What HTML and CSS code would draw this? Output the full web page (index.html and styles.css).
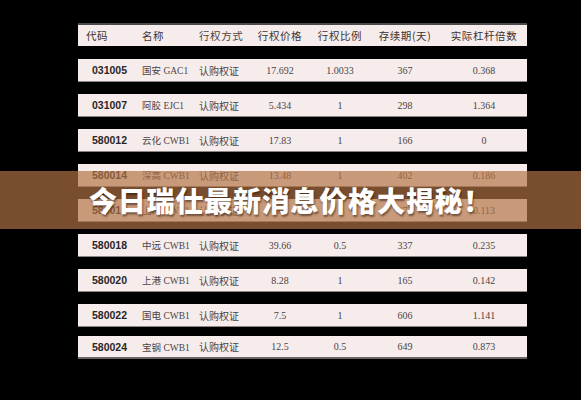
FILE: index.html
```html
<!DOCTYPE html>
<html lang="zh">
<head>
<meta charset="utf-8">
<link rel="stylesheet" href="styles.css">
</head>
<body>
<div class="page">
  <div class="table">
    <div class="row head">
      <div class="c code">代码</div>
      <div class="c name">名称</div>
      <div class="c type">行权方式</div>
      <div class="c num">行权价格</div>
      <div class="c num">行权比例</div>
      <div class="c num">存续期(天)</div>
      <div class="c num">实际杠杆倍数</div>
    </div>
    <div class="row first">
      <div class="c code">031005</div><div class="c name">国安 GAC1</div><div class="c type">认购权证</div>
      <div class="c num">17.692</div><div class="c num">1.0033</div><div class="c num">367</div><div class="c num">0.368</div>
    </div>
    <div class="row">
      <div class="c code">031007</div><div class="c name">阿胶 EJC1</div><div class="c type">认购权证</div>
      <div class="c num">5.434</div><div class="c num">1</div><div class="c num">298</div><div class="c num">1.364</div>
    </div>
    <div class="row">
      <div class="c code">580012</div><div class="c name">云化 CWB1</div><div class="c type">认购权证</div>
      <div class="c num">17.83</div><div class="c num">1</div><div class="c num">166</div><div class="c num">0</div>
    </div>
    <div class="row">
      <div class="c code">580014</div><div class="c name">深高 CWB1</div><div class="c type">认购权证</div>
      <div class="c num">13.48</div><div class="c num">1</div><div class="c num">402</div><div class="c num">0.186</div>
    </div>
    <div class="row">
      <div class="c code">580016</div><div class="c name">上汽 CWB1</div><div class="c type">认购权证</div>
      <div class="c num">32</div><div class="c num">1</div><div class="c num">472</div><div class="c num">0.113</div>
    </div>
    <div class="row">
      <div class="c code">580018</div><div class="c name">中远 CWB1</div><div class="c type">认购权证</div>
      <div class="c num">39.66</div><div class="c num">0.5</div><div class="c num">337</div><div class="c num">0.235</div>
    </div>
    <div class="row">
      <div class="c code">580020</div><div class="c name">上港 CWB1</div><div class="c type">认购权证</div>
      <div class="c num">8.28</div><div class="c num">1</div><div class="c num">165</div><div class="c num">0.142</div>
    </div>
    <div class="row">
      <div class="c code">580022</div><div class="c name">国电 CWB1</div><div class="c type">认购权证</div>
      <div class="c num">7.5</div><div class="c num">1</div><div class="c num">606</div><div class="c num">1.141</div>
    </div>
    <div class="row last">
      <div class="c code">580024</div><div class="c name">宝钢 CWB1</div><div class="c type">认购权证</div>
      <div class="c num">12.5</div><div class="c num">0.5</div><div class="c num">649</div><div class="c num">0.873</div>
    </div>
  </div>
  <div class="banner"><h1 class="title">今日瑞仕最新消息价格大揭秘！</h1></div>
</div>
</body>
</html>
```

FILE: styles.css
```css
html, body {
  margin: 0;
  padding: 0;
  background: #000;
}
.page {
  position: relative;
  width: 581px;
  height: 400px;
  overflow: hidden;
  background: #000;
}
.table {
  margin-left: 78px;
  padding-top: 23px;
  width: 449px;
  display: flex;
  flex-direction: column;
  gap: 12px;
}
.row {
  display: grid;
  grid-template-columns: 64px 57px 50px 62px 58px 72px 1fr;
  align-items: center;
  height: 23px;
  box-sizing: border-box;
  background: #f6ecec;
  border-bottom: 1px solid #8a8484;
  font-family: "Liberation Serif", "Noto Sans CJK SC", serif;
  font-size: 10px;
  color: #4a4444;
}
.row.head {
  height: 23px;
  border-top: 2px solid #4a4a4a;
  border-bottom: none;
  margin-bottom: 1px;
  font-family: "Noto Sans CJK SC", serif;
  font-size: 10.5px;
  color: #3a3434;
  letter-spacing: 0.6px;
}
.row.last {
  margin-top: -3px;
  border-bottom: 2px solid #6a6464;
}
.c {
  white-space: nowrap;
}
.code {
  padding-left: 14px;
  font-family: "Liberation Sans", Arial, sans-serif;
  font-weight: bold;
  font-size: 10.5px;
  color: #2a2626;
}
.head .code {
  padding-left: 8px;
  font-family: "Noto Sans CJK SC", serif;
  font-weight: normal;
  font-size: 10.5px;
  color: #3a3434;
}
.name {
  font-family: "Liberation Serif", "Noto Sans CJK SC", serif;
  font-size: 9.5px;
  color: #4a4444;
}
.head .name {
  font-family: "Noto Sans CJK SC", serif;
  font-size: 10.5px;
  color: #3a3434;
}
.type {
  font-family: "Noto Sans CJK SC", serif;
  color: #4a4444;
}
.num {
  text-align: center;
}
.banner {
  position: absolute;
  left: 0;
  top: 171px;
  width: 581px;
  height: 58px;
  background: rgba(178, 115, 68, 0.68);
  display: flex;
  align-items: center;
  justify-content: center;
}
.title {
  margin: 0;
  font-family: "Noto Sans CJK SC", sans-serif;
  font-weight: 900;
  font-size: 28px;
  line-height: 1;
  letter-spacing: 0.8px;
  color: #fff;
  text-shadow: 1px 2px 2px rgba(40, 20, 10, 0.55);
}
```
